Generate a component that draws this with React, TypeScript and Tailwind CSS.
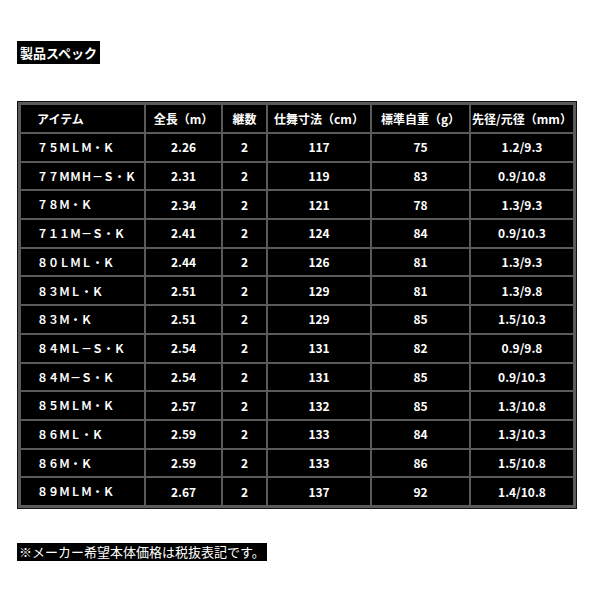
const HEAD = ["アイテム", "全長（m）", "継数", "仕舞寸法（cm）", "標準自重（g）", "先径/元径（mm）"];

const ROWS: string[][] = [
  ["７５ＭＬＭ・Ｋ", "2.26", "2", "117", "75", "1.2/9.3"],
  ["７７ＭＭＨ－Ｓ・Ｋ", "2.31", "2", "119", "83", "0.9/10.8"],
  ["７８Ｍ・Ｋ", "2.34", "2", "121", "78", "1.3/9.3"],
  ["７１１Ｍ－Ｓ・Ｋ", "2.41", "2", "124", "84", "0.9/10.3"],
  ["８０ＬＭＬ・Ｋ", "2.44", "2", "126", "81", "1.3/9.3"],
  ["８３ＭＬ・Ｋ", "2.51", "2", "129", "81", "1.3/9.8"],
  ["８３Ｍ・Ｋ", "2.51", "2", "129", "85", "1.5/10.3"],
  ["８４ＭＬ－Ｓ・Ｋ", "2.54", "2", "131", "82", "0.9/9.8"],
  ["８４Ｍ－Ｓ・Ｋ", "2.54", "2", "131", "85", "0.9/10.3"],
  ["８５ＭＬＭ・Ｋ", "2.57", "2", "132", "85", "1.3/10.8"],
  ["８６ＭＬ・Ｋ", "2.59", "2", "133", "84", "1.3/10.3"],
  ["８６Ｍ・Ｋ", "2.59", "2", "133", "86", "1.5/10.8"],
  ["８９ＭＬＭ・Ｋ", "2.67", "2", "137", "92", "1.4/10.8"],
];

const font = { fontFamily: '"Noto Sans CJK JP", "Noto Sans", sans-serif' };

export default function App() {
  return (
    <div className="min-h-[600px] w-[600px] bg-white px-[17px] pt-[39px]" style={font}>
      <div className="inline-block bg-black px-[3px] text-[13px] font-bold leading-[23px] text-white">
        製品スペック
      </div>

      {/* spec table */}
      <div className="mt-[37px] w-[560px] border border-[#111] bg-[#111]">
        <div className="border-[3px] border-[#5a5a5a]">
          <div className="grid grid-cols-[123px_75px_43px_102px_97px_102px] gap-[2px] bg-[#5a5a5a] text-[12px] font-bold text-white">
            {HEAD.map((h, i) => (
              <div
                key={h}
                className={`flex h-[27px] items-center bg-black ${i === 0 ? "pl-[16px]" : "justify-center"}`}
              >
                {h}
              </div>
            ))}
            {ROWS.map((r) =>
              r.map((c, i) => (
                <div
                  key={r[0] + i}
                  className={`flex h-[26.7px] items-center bg-black ${
                    i === 0 ? "pl-[16px] text-[11px] tracking-[0px]" : "justify-center"
                  }`}
                >
                  {c}
                </div>
              ))
            )}
          </div>
        </div>
      </div>

      <div className="mt-[34px] inline-block bg-black px-[2px] text-[13px] leading-[18px] text-white">
        ※メーカー希望本体価格は税抜表記です。
      </div>
    </div>
  );
}
